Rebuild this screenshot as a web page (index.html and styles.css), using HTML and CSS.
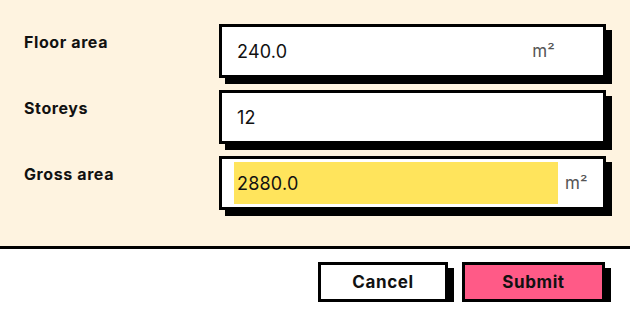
FILE: index.html
```html
<!DOCTYPE html>
<html lang="en">
<head>
    <meta charset="UTF-8">
    <title>Gross area</title>
    <link rel="stylesheet" href="styles.css">
</head>
<body>

<form class="calc">
    <div class="panel">
        <label class="label" for="floor">Floor area</label>
        <div class="field">
            <div class="input">
                <span id="floor">240.0</span>
                <span class="unit unit-inner">m²</span>
            </div>
            <span class="unit"></span>
        </div>

        <label class="label" for="storeys">Storeys</label>
        <div class="field">
            <div class="input"><span id="storeys">12</span></div>
            <span class="unit"></span>
        </div>

        <label class="label" for="gross">Gross area</label>
        <div class="field">
            <div class="input result"><span id="gross">2880.0</span></div>
            <span class="unit">m²</span>
        </div>
    </div>

    <div class="footer">
        <button type="button" class="btn">Cancel</button>
        <button type="button" class="btn primary">Submit</button>
    </div>
</form>

</body>
</html>
```

FILE: styles.css
```css
:root {
    --cream: #fef3e0;
    --yellow: #ffe45c;
    --pink: #ff5a87;
    --ink: #000;
}
* { box-sizing: border-box; }
body {
    margin: 0;
    font-family: 'Inter', 'Liberation Sans', sans-serif;
    background: white;
    color: #111;
}
.calc { width: 630px; }

/* Top panel */
.panel {
    background: var(--cream);
    border-bottom: 3px solid var(--ink);
    padding: 24px 24px 36px;
    display: grid;
    grid-template-columns: 195px 1fr;
    row-gap: 12px;
}
.label {
    font-size: 16px;
    font-weight: 700;
    padding-top: 8px;
    letter-spacing: 0.6px;
}
.field {
    height: 54px;
    border: 3px solid var(--ink);
    background: white;
    box-shadow: 6px 6px 0 var(--ink);
    padding: 3px 0 3px 12px;
    display: flex;
}
.input {
    flex: 1;
    display: flex;
    align-items: center;
    justify-content: space-between;
    padding: 0 3px;
    font-size: 18px;
    letter-spacing: 0.2px;
}
.input.result { background: var(--yellow); }
.unit {
    width: 45px;
    padding-left: 7px;
    display: flex;
    align-items: center;
    color: #555;
    font-size: 17px;
}
.unit-inner { width: auto; padding: 0; }

/* Buttons */
.footer {
    display: flex;
    justify-content: flex-end;
    gap: 14px;
    padding: 13px 25px 0;
}
.btn {
    height: 40px;
    width: 130px;
    border: 3px solid var(--ink);
    background: white;
    box-shadow: 6px 6px 0 var(--ink);
    font-family: inherit;
    font-size: 17px;
    font-weight: 700;
    letter-spacing: 0.6px;
    color: #111;
    padding: 0;
}
.btn.primary { background: var(--pink); width: 143px; }
```
